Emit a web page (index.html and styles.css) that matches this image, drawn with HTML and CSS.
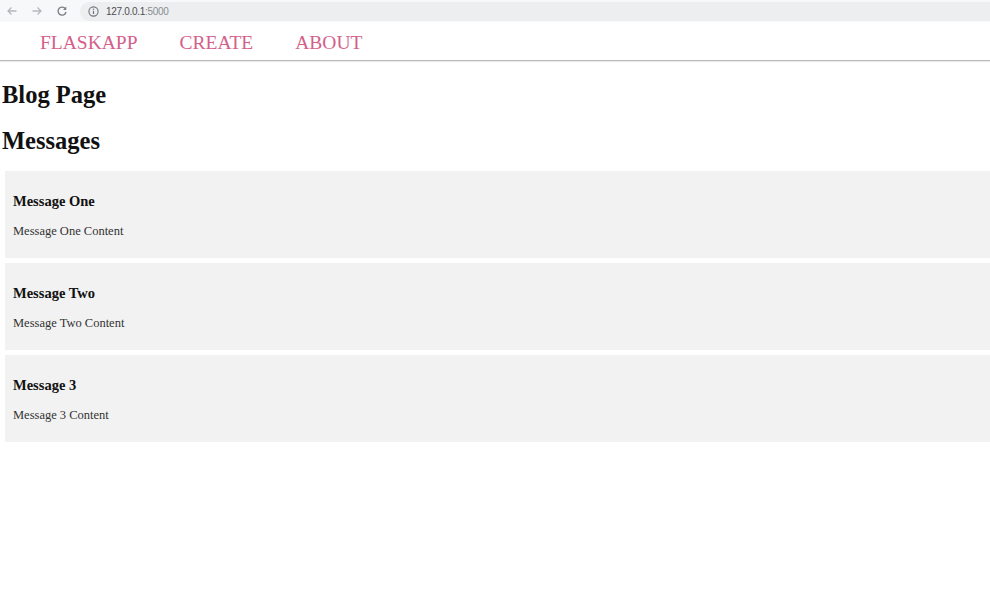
FILE: index.html
```html
<!DOCTYPE html>
<html>
<head>
<meta charset="utf-8">
<title>FlaskApp</title>
<link rel="stylesheet" href="styles.css">
</head>
<body>
<div class="chrome">
  <div class="chrome-btns">
    <svg class="ico" width="12" height="12" viewBox="0 0 12 12"><path d="M10.5 6H2M5.5 2.5L2 6l3.5 3.5" fill="none" stroke="#b5b8bb" stroke-width="1.3"/></svg>
    <svg class="ico" width="12" height="12" viewBox="0 0 12 12"><path d="M1.5 6H10M6.5 2.5L10 6l-3.5 3.5" fill="none" stroke="#b5b8bb" stroke-width="1.3"/></svg>
    <svg class="ico" width="12" height="12" viewBox="0 0 12 12"><path d="M9.6 4.2A4 4 0 1 0 10 7" fill="none" stroke="#7d8185" stroke-width="1.4"/><path d="M10.3 1.6v3.3H7z" fill="#7d8185"/></svg>
  </div>
  <div class="omnibox">
    <svg width="11" height="11" viewBox="0 0 11 11"><circle cx="5.5" cy="5.5" r="4.6" fill="none" stroke="#70747a" stroke-width="1.1"/><path d="M5.5 4.8v3.2" stroke="#70747a" stroke-width="1.2"/><circle cx="5.5" cy="3.2" r="0.7" fill="#70747a"/></svg>
    <span class="url">127.0.0.1<span class="port">:5000</span></span>
  </div>
</div>
<nav class="nav">
  <a class="nav-link" href="#">FLASKAPP</a>
  <a class="nav-link" href="#">CREATE</a>
  <a class="nav-link" href="#">ABOUT</a>
</nav>
<main class="content">
  <h2 class="page-title">Blog Page</h2>
  <h2 class="section-title">Messages</h2>
  <div class="messages">
    <div class="message">
      <div class="message-title">Message One</div>
      <div class="message-body">Message One Content</div>
    </div>
    <div class="message">
      <div class="message-title">Message Two</div>
      <div class="message-body">Message Two Content</div>
    </div>
    <div class="message">
      <div class="message-title">Message 3</div>
      <div class="message-body">Message 3 Content</div>
    </div>
  </div>
</main>
</body>
</html>
```
FILE: styles.css
```css
html, body {
  margin: 0;
  padding: 0;
  background: #ffffff;
  font-family: "Liberation Serif", "Times New Roman", serif;
  color: #111;
}

.chrome {
  height: 22px;
  background: #f7f8f9;
  display: flex;
  align-items: center;
}

.chrome-btns {
  display: flex;
  align-items: center;
  gap: 13px;
  padding-left: 6px;
  width: 74px;
}

.ico {
  display: block;
}

.omnibox {
  flex: 1;
  height: 19px;
  background: #eceef0;
  border-radius: 10px 0 0 10px;
  display: flex;
  align-items: center;
  padding-left: 8px;
  gap: 7px;
}

.url {
  font-family: "Liberation Sans", Arial, sans-serif;
  font-size: 10px;
  color: #4c4f53;
  letter-spacing: -0.3px;
}

.port {
  color: #8a8d91;
}

.nav {
  height: 39px;
  box-sizing: border-box;
  padding: 4px 0 0 40px;
  display: flex;
  gap: 42px;
  border-bottom: 1px solid #b9b9b9;
  box-shadow: 0 1px 1px rgba(0, 0, 0, 0.08);
}

.nav-link {
  font-size: 19.5px;
  line-height: 34px;
  color: #d4608a;
  text-decoration: none;
}

.content {
  padding-left: 2px;
}

.page-title,
.section-title {
  font-size: 24.5px;
  font-weight: bold;
  line-height: 30px;
  margin: 0;
}

.page-title {
  margin-top: 19px;
}

.section-title {
  margin-top: 16px;
}

.messages {
  margin-top: 15px;
  margin-left: 3px;
  display: flex;
  flex-direction: column;
  gap: 5px;
}

.message {
  background: #f2f2f2;
  height: 87px;
  box-sizing: border-box;
  padding: 21px 8px 0 8px;
}

.message-title {
  font-size: 14.5px;
  font-weight: bold;
  line-height: 18px;
  color: #111;
}

.message-body {
  font-size: 12.5px;
  line-height: 16px;
  margin-top: 13px;
  color: #333;
}
```
